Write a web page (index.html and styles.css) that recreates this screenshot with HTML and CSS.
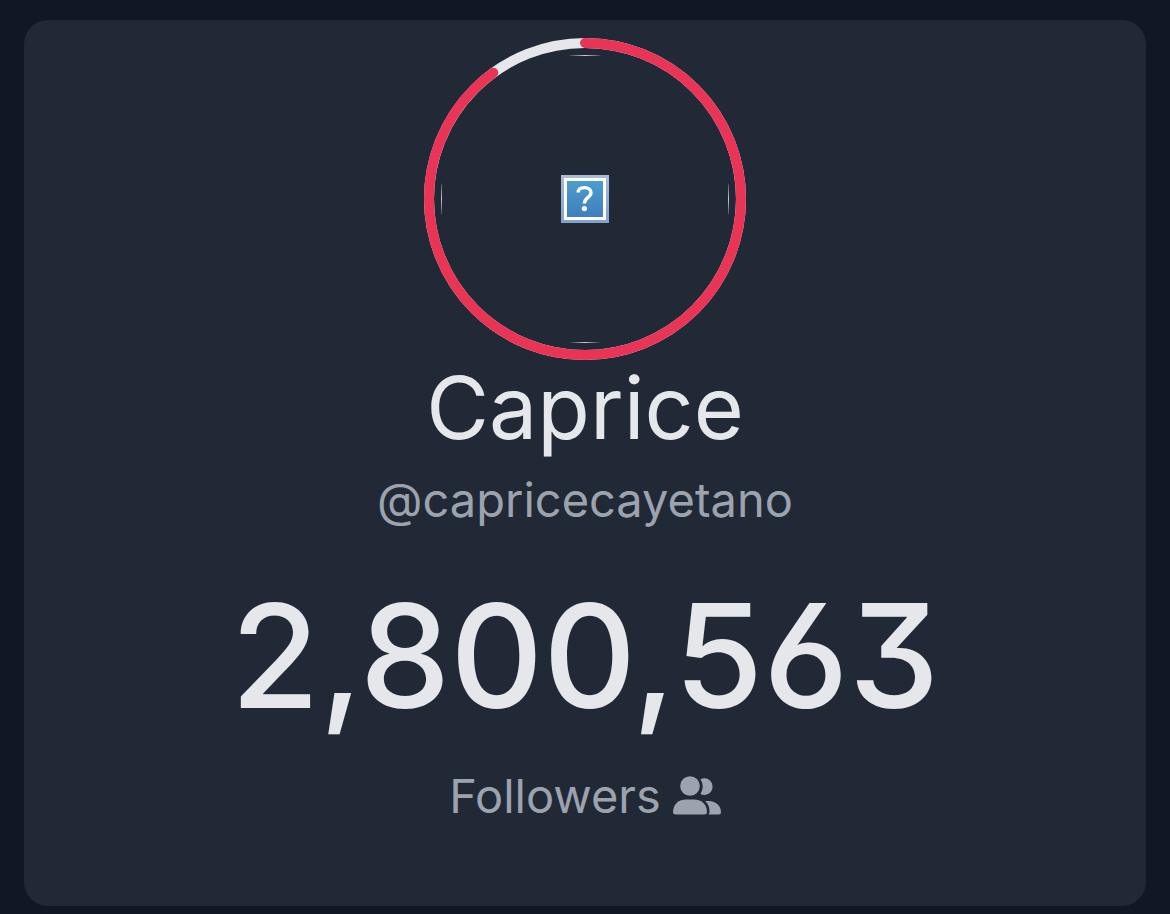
FILE: index.html
```html
<!DOCTYPE html>
<html lang="en">
<head>
    <meta charset="UTF-8">
    <meta name="viewport" content="width=device-width, initial-scale=1.0">
    <title>Caprice - Followers</title>
    <link rel="stylesheet" href="styles.css">
</head>
<body>
    <main class="card">
        <div class="avatar">
            <svg class="ring" viewBox="0 0 322 322" aria-hidden="true">
                <circle class="ring-track" cx="161" cy="161" r="156"/>
                <circle class="ring-value" cx="161" cy="161" r="156" pathLength="100" transform="rotate(-90 161 161)"/>
            </svg>
            <div class="photo">
                <div class="photo-frame">
                    <svg class="photo-icon" viewBox="0 0 48 48" role="img" aria-label="Profile picture">
                        <defs>
                            <linearGradient id="edge" x1="0" y1="0" x2="0" y2="1">
                                <stop offset="0" stop-color="#a9bad6"/>
                                <stop offset="1" stop-color="#7fa2cd"/>
                            </linearGradient>
                            <linearGradient id="fill" x1="0" y1="0" x2="0" y2="1">
                                <stop offset="0" stop-color="#4b9dce"/>
                                <stop offset="1" stop-color="#3f7fbd"/>
                            </linearGradient>
                        </defs>
                        <rect width="48" height="48" fill="url(#edge)"/>
                        <rect x="3" y="3" width="42" height="42" fill="#fff"/>
                        <rect x="6" y="6" width="36" height="36" fill="url(#fill)"/>
                        <path d="M17.2 17.5C17.2 14.2 19.8 12.6 23.5 12.6C27.4 12.6 30 14.6 30 17.8C30 22.8 23.4 22.2 23.4 28.5" fill="none" stroke="#fff" stroke-width="3.4"/>
                        <circle cx="23.4" cy="33.6" r="2.6" fill="#fff"/>
                    </svg>
                </div>
            </div>
        </div>
        <h1 class="name">Caprice</h1>
        <p class="handle">@capricecayetano</p>
        <p class="count">2,800,563</p>
        <p class="label">
            Followers
            <svg class="label-icon" viewBox="0 0 48 40" aria-hidden="true">
                <circle cx="17" cy="10" r="9.8"/>
                <path d="M27.5 3.2A8.3 8.3 0 1 1 27.5 18Q32 10.500 27.500 3.200Z"/>
                <path d="M3 38.500Q0 38.500 0 36C0 28 6 23.500 13 23.500H21C28 23.500 34 28 34 36Q34 38.500 31 38.500Z"/>
                <path d="M32 25H36C43 25 48 30 48 36Q48 38.500 45.500 38.500H35.500Q36.500 37.500 36.500 35.500C36.500 31 35 27.500 32 25Z"/>
            </svg>
        </p>
    </main>
</body>
</html>
```

FILE: styles.css
```css
* {
    box-sizing: border-box;
}
body {
    margin: 0;
    padding: 20px 24px 8px;
    background-color: #111725;
    color: #e5e7eb;
    font-family: Inter, Roboto, sans-serif;
}
.card {
    display: flex;
    flex-direction: column;
    align-items: center;
    padding: 18px 24px 74px;
    border-radius: 24px;
    background-color: #212936;
}
.avatar {
    display: grid;
    place-items: center;
}
.ring,
.photo {
    grid-area: 1 / 1;
}
.ring {
    width: 322px;
    height: 322px;
    fill: none;
    stroke-width: 10;
}
.ring-track {
    stroke: #e5e7eb;
}
.ring-value {
    stroke: #ea3455;
    stroke-linecap: round;
    stroke-dasharray: 90 100;
}
/* the round clip leaves only the middle of each frame edge visible */
.photo {
    width: 288px;
    height: 288px;
    border-radius: 50%;
    overflow: hidden;
}
.photo-frame {
    display: grid;
    place-items: center;
    height: 100%;
    border: 1px solid #c8cacb;
}
.photo-icon {
    width: 48px;
    height: 48px;
}
.name,
.handle,
.count,
.label {
    margin: 0;
    font-weight: 400;
}
.name {
    font-size: 86px;
    line-height: 96px;
}
.handle {
    margin-top: 8px;
    color: #9ca3af;
    font-size: 47px;
    line-height: 72px;
}
.count {
    margin-top: 24px;
    font-size: 144px;
    font-weight: 500;
    line-height: 192px;
    font-feature-settings: "cv03", "cv09";
}
.label {
    display: flex;
    align-items: center;
    gap: 12px;
    margin-top: 8px;
    color: #9ca3af;
    font-size: 47px;
    line-height: 72px;
}
.label-icon {
    width: 48px;
    height: 40px;
    fill: currentColor;
}
```
